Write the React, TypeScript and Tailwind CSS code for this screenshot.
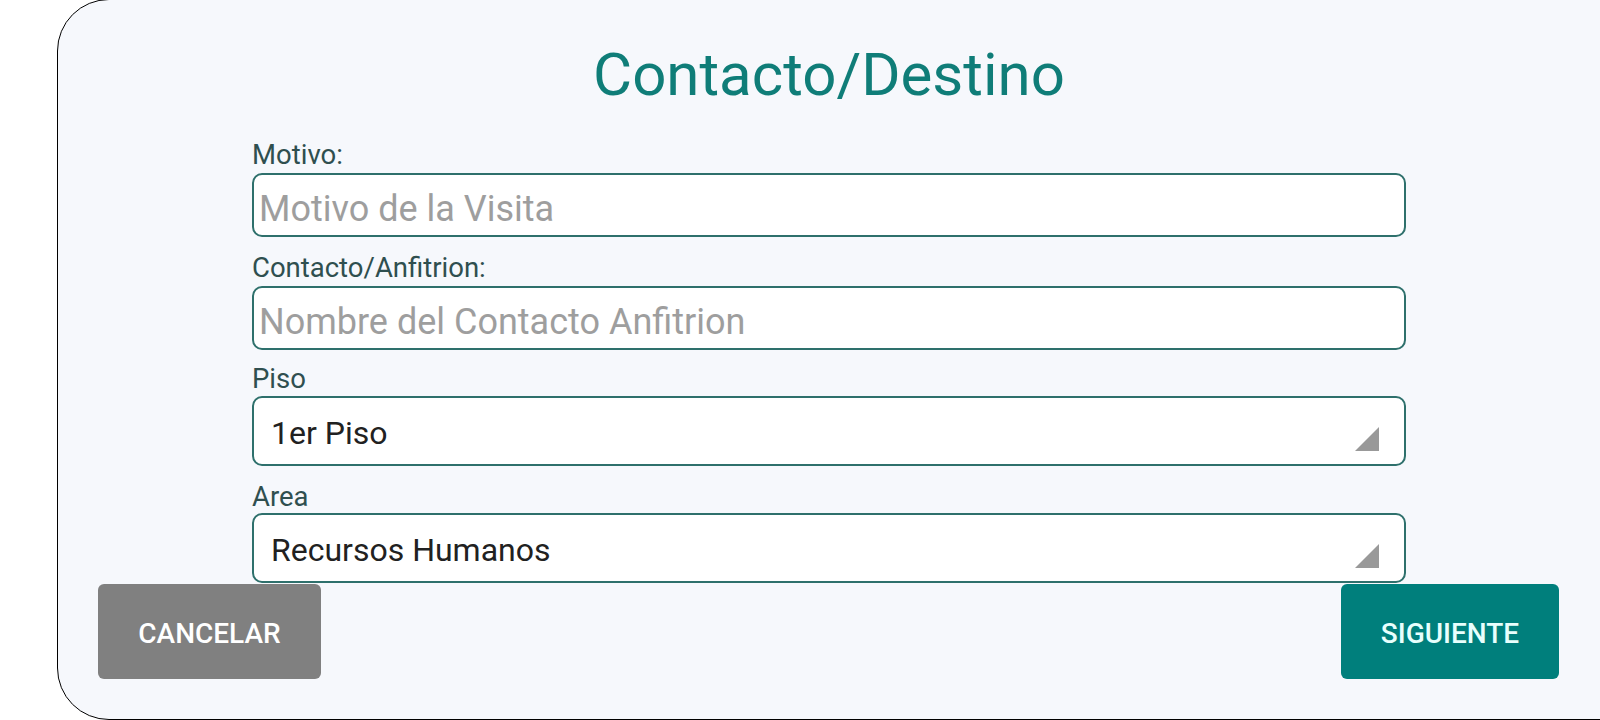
import { ReactNode } from 'react'

// Small corner triangle used as the dropdown marker in the select boxes
function CornerArrow() {
  return (
    <svg className="mb-[13px] h-[24px] w-[24px] self-end blur-[0.4px]" viewBox="0 0 24 24">
      <polygon points="24,0 24,24 0,24" fill="#999999" />
    </svg>
  )
}

function FieldLabel({ children, className }: { children: ReactNode; className: string }) {
  return (
    <label className={`block h-[26px] text-[27.5px] leading-[26px] text-[#2f4f4f] ${className}`}>
      {children}
    </label>
  )
}

function TextField({ placeholder }: { placeholder: string }) {
  return (
    <input
      type="text"
      placeholder={placeholder}
      className="mt-[5px] h-[64px] w-full rounded-[10px] border-2 border-[#2e706c] bg-white pt-[8px] pl-[5px] text-[36px] leading-none text-[#222] outline-none placeholder:text-[#9e9e9e]"
    />
  )
}

function SelectField({ value, className }: { value: string; className: string }) {
  return (
    <div
      role="combobox"
      className={`flex h-[70px] items-center justify-between rounded-[10px] border-2 border-[#2e706c] bg-white pr-[25px] pl-[17px] ${className}`}
    >
      <span className="pt-[3px] text-[32px] leading-none text-[#212121]">{value}</span>
      <CornerArrow />
    </div>
  )
}

export default function App() {
  return (
    <div className="h-[720px] w-[1600px] overflow-hidden bg-white font-['Roboto',sans-serif]">
      <div className="-mt-px ml-[57px] flex h-[721px] w-[1600px] flex-col rounded-[52px] border border-black bg-[#f6f8fc]">
        {/* form column */}
        <div className="ml-[194px] flex w-[1154px] flex-col">
          <h1 className="mt-[45px] h-[60px] text-center text-[60px] leading-[60px] text-[#0f7d78]">
            Contacto/Destino
          </h1>

          <FieldLabel className="mt-[37px]">Motivo:</FieldLabel>
          <TextField placeholder="Motivo de la Visita" />

          <FieldLabel className="mt-[18px]">Contacto/Anfitrion:</FieldLabel>
          <TextField placeholder="Nombre del Contacto Anfitrion" />

          <FieldLabel className="mt-[16px]">Piso</FieldLabel>
          <SelectField value="1er Piso" className="mt-[4px]" />

          <FieldLabel className="mt-[18px]">Area</FieldLabel>
          <SelectField value="Recursos Humanos" className="mt-[3px]" />
        </div>

        {/* actions */}
        <div className="mt-[1px] ml-[40px] flex w-[1461px] justify-between">
          <button className="h-[95px] w-[223px] rounded-[6px] bg-[#808080] pt-[4px] text-[28px] font-medium text-white">
            CANCELAR
          </button>
          <button className="h-[95px] w-[218px] rounded-[6px] bg-[#007f7c] pt-[4px] text-[28px] font-medium text-[#e8fffd]">
            SIGUIENTE
          </button>
        </div>
      </div>
    </div>
  )
}
